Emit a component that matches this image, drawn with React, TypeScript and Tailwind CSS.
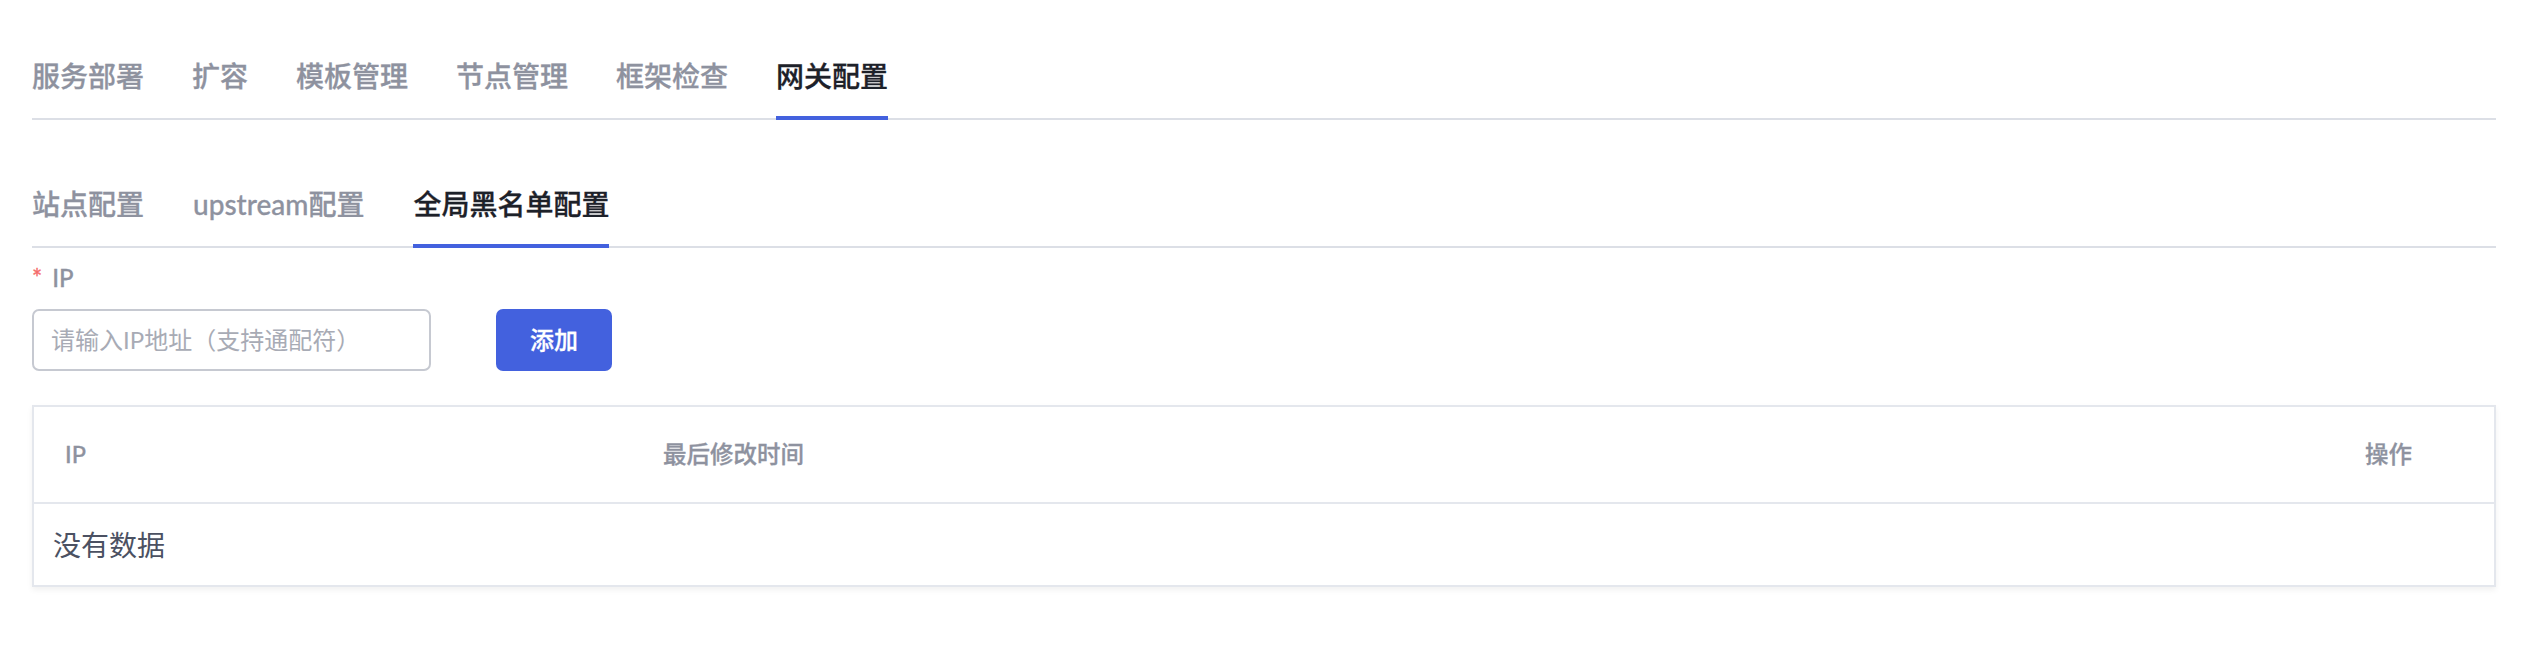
import React from "react";

const FONT = { fontFamily: 'Lato, "Noto Sans CJK SC", sans-serif' };

function Tabs({ items, active, gap }: { items: string[]; active: number; gap: string }) {
  return (
    <div className={"flex border-b-2 border-[#dcdfe6] " + gap}>
      {items.map((t, i) => (
        <div
          key={t}
          className={
            "-mb-[2px] h-[64px] pb-[20px] border-b-4 text-[28px] leading-[40px] font-medium [-webkit-text-stroke:0.3px_currentColor] whitespace-nowrap " +
            (i === active
              ? "border-[#4361de] text-[#1d2129]"
              : "border-transparent text-[#8e929f]")
          }
        >
          {t}
        </div>
      ))}
    </div>
  );
}

export default function App() {
  return (
    <div className="min-h-[664px] bg-white pl-[32px] pr-[28px] pt-[56px]" style={FONT}>
      <Tabs items={["服务部署", "扩容", "模板管理", "节点管理", "框架检查", "网关配置"]} active={5} gap="gap-[48px]" />
      <div className="mt-[64px]">
        <Tabs items={["站点配置", "upstream配置", "全局黑名单配置"]} active={2} gap="gap-[49px]" />
      </div>
      <div className="mt-[14px] flex items-center gap-[10px] text-[24px] leading-[32px] font-medium [-webkit-text-stroke:0.3px_currentColor] text-[#8e929f]">
        <span className="text-[#f56c6c]">*</span>
        <span>IP</span>
      </div>
      <div className="mt-[15px] flex items-center gap-[65px]">
        <div className="flex h-[62px] w-[399px] items-center rounded-[7px] border-2 border-[#c6c9d1] px-[17px]">
          <input
            className="w-full bg-transparent text-[24px] text-[#303133] outline-none placeholder:text-[#a8abb5]"
            placeholder="请输入IP地址（支持通配符）"
            style={FONT}
          />
        </div>
        <button className="h-[62px] w-[116px] rounded-[7px] bg-[#4361de] text-[24px] font-medium [-webkit-text-stroke:0.3px_currentColor] text-white" style={FONT}>
          添加
        </button>
      </div>
      <div className="mt-[34px] border-2 border-[#e4e7ed] shadow-[0_3px_6px_rgba(0,0,0,0.06)]">
        <div className="grid h-[97px] grid-cols-[629px_1fr_160px] items-center border-b-2 border-[#e4e7ed] text-[23.5px] font-medium [-webkit-text-stroke:0.3px_currentColor] text-[#8e929f]">
          <div className="pl-[31px]">IP</div>
          <div>最后修改时间</div>
          <div className="pl-[31px]">操作</div>
        </div>
        <div className="flex h-[81px] items-center pl-[19px] text-[28px] text-[#4b5162]">没有数据</div>
      </div>
    </div>
  );
}
